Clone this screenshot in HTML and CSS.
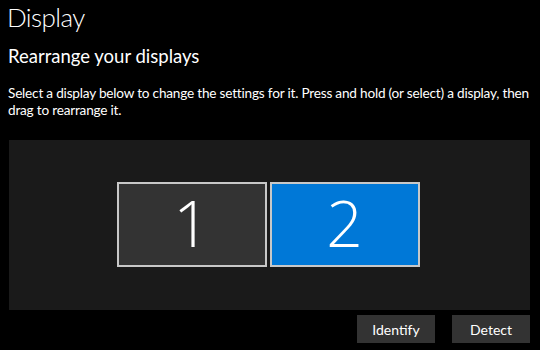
FILE: index.html
```html
<!DOCTYPE html>
<html lang="en">
<head>
  <meta charset="UTF-8" />
  <title>Display</title>
  <link rel="stylesheet" href="styles.css">
</head>
<body>
  <div class="page">
    <h1 class="title">Display</h1>
    <h2 class="subtitle">Rearrange your displays</h2>
    <p class="hint">Select a display below to change the settings for it. Press and hold (or select) a display, then drag to rearrange it.</p>
    <div class="canvas">
      <div class="monitor">1</div>
      <div class="monitor selected">2</div>
    </div>
    <div class="actions">
      <button class="btn">Identify</button>
      <button class="btn">Detect</button>
    </div>
  </div>
</body>
</html>
```

FILE: styles.css
```css
* {
  box-sizing: border-box;
}

body {
  margin: 0;
  background: #000;
  color: #fff;
  font-family: 'Lato', 'Open Sans', sans-serif;
  width: 540px;
  height: 350px;
  overflow: hidden;
}

.page {
  padding: 0 10px 0 8px;
}

.title {
  margin: 0;
  padding-top: 2px;
  font-size: 26px;
  font-weight: 300;
  letter-spacing: -0.6px;
  line-height: 30px;
  margin-left: -1px;
}

.subtitle {
  margin: 11px 0 0;
  font-size: 18.5px;
  font-weight: 400;
  line-height: 26px;
}

.hint {
  margin: 16px -10px 0 0;
  font-size: 13.6px;
  letter-spacing: -0.2px;
  line-height: 17px;
}

.canvas {
  margin: 21px 0 0 1px;
  height: 170px;
  background: #1a1a1a;
  display: flex;
  justify-content: center;
  align-items: flex-start;
  gap: 3px;
  padding-top: 42px;
  padding-right: 3px;
}

.monitor {
  width: 150px;
  height: 85px;
  background: #333;
  border: 2px solid #c8c8c8;
  display: flex;
  align-items: center;
  justify-content: center;
  font-family: 'Open Sans', sans-serif;
  font-size: 64px;
  font-weight: 300;
  line-height: 1;
  padding-bottom: 4px;
}

.monitor.selected {
  background: #0078d7;
}

.actions {
  display: flex;
  justify-content: flex-end;
  gap: 17px;
  margin-top: 5px;
}

.btn {
  width: 78px;
  height: 28px;
  border: none;
  background: #333;
  color: #fff;
  font-family: inherit;
  font-size: 14px;
  padding: 0;
}
```
